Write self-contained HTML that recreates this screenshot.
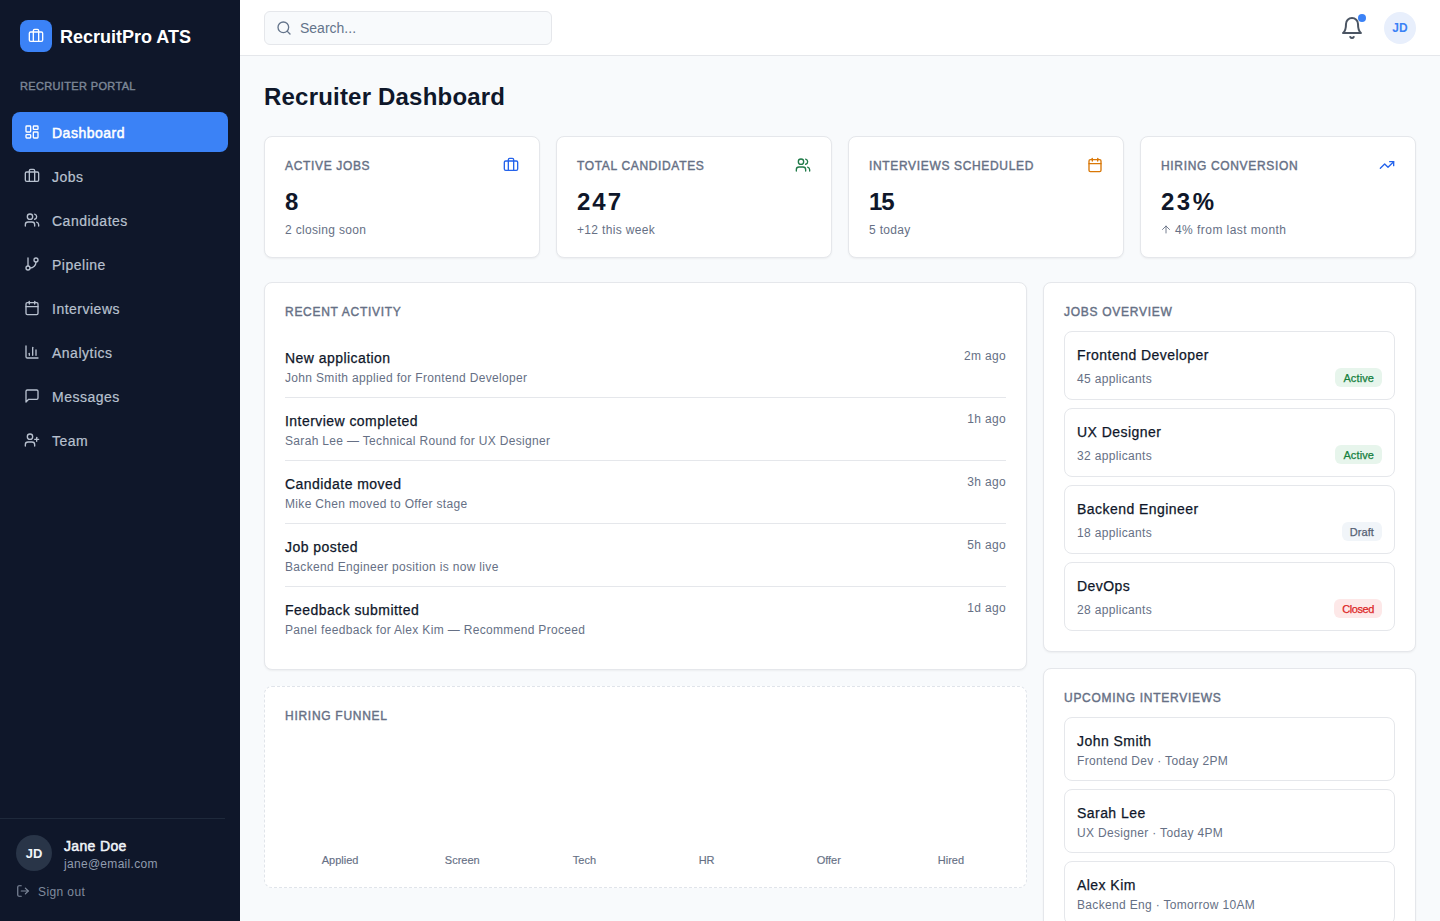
<!DOCTYPE html>
<html>
<head>
<meta charset="utf-8">
<style>
*{box-sizing:border-box;margin:0;padding:0}
html,body{width:1440px;height:921px;overflow:hidden;background:#f8fafc;font-family:"Liberation Sans",sans-serif;color:#0f172a}
svg{display:block}
.ic{fill:none;stroke:currentColor;stroke-width:2;stroke-linecap:round;stroke-linejoin:round}
#side{position:absolute;left:0;top:0;width:240px;height:921px;background:#0f172a;color:#fff}
.logo{position:absolute;left:20px;top:20px;width:32px;height:32px;border-radius:8px;background:#3b82f6;display:flex;align-items:center;justify-content:center;color:#fff}
.brand{position:absolute;left:60px;top:23px;line-height:28px;font-size:18px;font-weight:700;color:#fff}
.portal{position:absolute;left:20px;top:78px;line-height:16px;font-size:11px;font-weight:400;-webkit-text-stroke:0.4px currentColor;letter-spacing:0.35px;color:#7d8797}
.nav{position:absolute;left:12px;width:216px;height:40px;border-radius:8px;display:flex;align-items:center;padding-left:12px;color:#b8c1cf;font-size:14px;letter-spacing:0.5px;-webkit-text-stroke:0.2px currentColor}
.nav span{position:relative;top:1px}
.nav svg{width:16px;height:16px;margin-right:12px}
.nav.act{background:#3b82f6;color:#fff;-webkit-text-stroke:0.5px currentColor}
.divl{position:absolute;left:0;top:818px;width:225px;height:1px;background:#1e293b}
.uav{position:absolute;left:16px;top:835px;width:36px;height:36px;border-radius:50%;background:#293548;color:#f1f5f9;font-size:13px;font-weight:700;display:flex;align-items:center;justify-content:center}
.uname{position:absolute;left:64px;top:836px;line-height:20px;font-size:14px;font-weight:400;-webkit-text-stroke:0.5px currentColor;letter-spacing:0.35px;color:#f1f5f9}
.umail{position:absolute;left:64px;top:856px;line-height:16px;font-size:12px;color:#919caf;letter-spacing:0.3px}
.signout{position:absolute;left:16px;top:883px;height:16px;display:flex;align-items:center;color:#808b9d;font-size:12px;letter-spacing:0.4px}
.signout span{position:relative;top:1px}
.signout svg{width:14px;height:14px;margin-right:8px}

#top{position:absolute;left:240px;top:0;width:1200px;height:56px;background:#fff;border-bottom:1px solid #e5e7eb}
.search{position:absolute;left:24px;top:11px;width:288px;height:34px;border:1px solid #e5e7eb;border-radius:6px;background:#f8fafc;display:flex;align-items:center;padding-left:11px;color:#64748b;font-size:14px}
.search svg{width:16px;height:16px;margin-right:8px}
.bell{position:absolute;left:1100px;top:16px;width:24px;height:24px;color:#4b5563}
.dot{position:absolute;left:1118px;top:14px;width:8px;height:8px;border-radius:50%;background:#3b82f6}
.tav{position:absolute;left:1144px;top:12px;width:32px;height:32px;border-radius:50%;background:#e8effc;color:#3b82f6;font-size:12px;font-weight:700;display:flex;align-items:center;justify-content:center}

.h1{position:absolute;left:264px;top:81px;letter-spacing:0.2px;line-height:32px;font-size:24px;font-weight:700;color:#0f172a}
.card{position:absolute;background:#fff;border:1px solid #e5e7eb;border-radius:8px;box-shadow:0 1px 2px rgba(0,0,0,0.05)}
.stat{top:136px;width:276px;height:122px;padding:20px}
.lab{height:16px;display:flex;justify-content:space-between;align-items:center;font-size:12px;line-height:16px;font-weight:400;letter-spacing:0.66px;color:#667085}
.lab span{position:relative;top:1px;-webkit-text-stroke:0.4px currentColor}
.lab svg{width:16px;height:16px}
.val{margin-top:12px;line-height:32px;font-size:24px;font-weight:700;color:#0f172a;position:relative;top:1px;letter-spacing:0px}
.sub{margin-top:4px;line-height:16px;font-size:12px;color:#667085;position:relative;top:1px;letter-spacing:0.33px}
.sec{line-height:16px;font-size:12px;font-weight:400;-webkit-text-stroke:0.4px currentColor;letter-spacing:0.72px;color:#667085;position:relative;top:1px}
.act-item{display:flex;justify-content:space-between;align-items:flex-start;padding:12px 0;border-bottom:1px solid #e5e7eb;height:63px}
.act-item:last-child{border-bottom:none;height:62px}
.it{line-height:20px;font-size:14px;color:#0f172a;letter-spacing:0.45px;-webkit-text-stroke:0.25px #0f172a;position:relative;top:1px}
.is{margin-top:2px;line-height:16px;font-size:12px;color:#667085;letter-spacing:0.33px;position:relative;top:1px}
.tm{line-height:16px;font-size:12px;color:#667085;letter-spacing:0.33px;position:relative;top:1px}
.job{border:1px solid #e5e7eb;border-radius:8px;padding:12px;height:69px;margin-bottom:8px}
.jrow{margin-top:4px;display:flex;justify-content:space-between;align-items:center;height:19px}
.badge{font-size:11px;line-height:15px;padding:3px 8px 1px;border-radius:6px;font-weight:400;-webkit-text-stroke:0.25px currentColor;letter-spacing:0.1px}
.g{background:#e7f5ec;color:#15803d}
.d{background:#f1f5f9;color:#556173}
.r{background:#fde8e8;color:#dc2626}
.iv{border:1px solid #e5e7eb;border-radius:8px;padding:12px;height:64px;margin-bottom:8px}
.funnel{border:1px dashed #e0e4ea;box-shadow:none}
.flabs{position:absolute;left:20px;right:20px;top:164px;display:flex;gap:12px}
.flabs div{flex:1;text-align:center;font-size:11px;line-height:16px;color:#667085;position:relative;top:1px;-webkit-text-stroke:0.15px currentColor}
</style>
</head>
<body>
<div id="side">
  <div class="logo"><svg class="ic" width="16" height="16" viewBox="0 0 24 24"><path d="M16 20V4a2 2 0 0 0-2-2h-4a2 2 0 0 0-2 2v16"/><rect width="20" height="14" x="2" y="6" rx="2"/></svg></div>
  <div class="brand">RecruitPro ATS</div>
  <div class="portal">RECRUITER PORTAL</div>

  <div class="nav act" style="top:112px"><svg class="ic" viewBox="0 0 24 24"><rect width="7" height="9" x="3" y="3" rx="1"/><rect width="7" height="5" x="14" y="3" rx="1"/><rect width="7" height="9" x="14" y="12" rx="1"/><rect width="7" height="5" x="3" y="16" rx="1"/></svg><span>Dashboard</span></div>
  <div class="nav" style="top:156px"><svg class="ic" viewBox="0 0 24 24"><path d="M16 20V4a2 2 0 0 0-2-2h-4a2 2 0 0 0-2 2v16"/><rect width="20" height="14" x="2" y="6" rx="2"/></svg><span>Jobs</span></div>
  <div class="nav" style="top:200px"><svg class="ic" viewBox="0 0 24 24"><path d="M16 21v-2a4 4 0 0 0-4-4H6a4 4 0 0 0-4 4v2"/><circle cx="9" cy="7" r="4"/><path d="M22 21v-2a4 4 0 0 0-3-3.87"/><path d="M16 3.13a4 4 0 0 1 0 7.75"/></svg><span>Candidates</span></div>
  <div class="nav" style="top:244px"><svg class="ic" viewBox="0 0 24 24"><line x1="6" x2="6" y1="3" y2="15"/><circle cx="18" cy="6" r="3"/><circle cx="6" cy="18" r="3"/><path d="M18 9a9 9 0 0 1-9 9"/></svg><span>Pipeline</span></div>
  <div class="nav" style="top:288px"><svg class="ic" viewBox="0 0 24 24"><rect width="18" height="18" x="3" y="4" rx="2"/><path d="M16 2v4"/><path d="M8 2v4"/><path d="M3 10h18"/></svg><span>Interviews</span></div>
  <div class="nav" style="top:332px"><svg class="ic" viewBox="0 0 24 24"><path d="M3 3v16a2 2 0 0 0 2 2h16"/><path d="M18 17V9"/><path d="M13 17V5"/><path d="M8 17v-3"/></svg><span>Analytics</span></div>
  <div class="nav" style="top:376px"><svg class="ic" viewBox="0 0 24 24"><path d="M21 15a2 2 0 0 1-2 2H7l-4 4V5a2 2 0 0 1 2-2h14a2 2 0 0 1 2 2z"/></svg><span>Messages</span></div>
  <div class="nav" style="top:420px"><svg class="ic" viewBox="0 0 24 24"><path d="M16 21v-2a4 4 0 0 0-4-4H6a4 4 0 0 0-4 4v2"/><circle cx="9" cy="7" r="4"/><line x1="19" x2="19" y1="8" y2="14"/><line x1="22" x2="16" y1="11" y2="11"/></svg><span>Team</span></div>

  <div class="divl"></div>
  <div class="uav">JD</div>
  <div class="uname">Jane Doe</div>
  <div class="umail">jane@email.com</div>
  <div class="signout"><svg class="ic" viewBox="0 0 24 24"><path d="M9 21H5a2 2 0 0 1-2-2V5a2 2 0 0 1 2-2h4"/><polyline points="16 17 21 12 16 7"/><line x1="21" x2="9" y1="12" y2="12"/></svg><span>Sign out</span></div>
</div>

<div id="top">
  <div class="search"><svg class="ic" viewBox="0 0 24 24"><circle cx="11" cy="11" r="8"/><path d="m21 21-4.3-4.3"/></svg>Search...</div>
  <svg class="ic bell" viewBox="0 0 24 24"><path d="M6 8a6 6 0 0 1 12 0c0 7 3 9 3 9H3s3-2 3-9"/><path d="M10.3 21a1.94 1.94 0 0 0 3.4 0"/></svg>
  <div class="dot"></div>
  <div class="tav">JD</div>
</div>

<div class="h1">Recruiter Dashboard</div>

<div class="card stat" style="left:264px">
  <div class="lab"><span>ACTIVE JOBS</span><svg class="ic" viewBox="0 0 24 24" style="color:#2563eb"><path d="M16 20V4a2 2 0 0 0-2-2h-4a2 2 0 0 0-2 2v16"/><rect width="20" height="14" x="2" y="6" rx="2"/></svg></div>
  <div class="val">8</div>
  <div class="sub">2 closing soon</div>
</div>
<div class="card stat" style="left:556px">
  <div class="lab"><span>TOTAL CANDIDATES</span><svg class="ic" viewBox="0 0 24 24" style="color:#1f7a48"><path d="M16 21v-2a4 4 0 0 0-4-4H6a4 4 0 0 0-4 4v2"/><circle cx="9" cy="7" r="4"/><path d="M22 21v-2a4 4 0 0 0-3-3.87"/><path d="M16 3.13a4 4 0 0 1 0 7.75"/></svg></div>
  <div class="val" style="letter-spacing:2px">247</div>
  <div class="sub">+12 this week</div>
</div>
<div class="card stat" style="left:848px">
  <div class="lab"><span>INTERVIEWS SCHEDULED</span><svg class="ic" viewBox="0 0 24 24" style="color:#d97706"><rect width="18" height="18" x="3" y="4" rx="2"/><path d="M16 2v4"/><path d="M8 2v4"/><path d="M3 10h18"/></svg></div>
  <div class="val" style="letter-spacing:-1px">15</div>
  <div class="sub">5 today</div>
</div>
<div class="card stat" style="left:1140px">
  <div class="lab"><span>HIRING CONVERSION</span><svg class="ic" viewBox="0 0 24 24" style="color:#2563eb"><polyline points="22 7 13.5 15.5 8.5 10.5 2 17"/><polyline points="16 7 22 7 22 13"/></svg></div>
  <div class="val" style="letter-spacing:2.5px">23%</div>
  <div class="sub" style="display:flex;align-items:center;letter-spacing:0.45px"><svg class="ic" viewBox="0 0 24 24" style="width:12px;height:13px;margin-left:-1px;margin-right:3px;position:relative;top:-1px;stroke-width:1.8"><path d="m5 12 7-7 7 7"/><path d="M12 19V5"/></svg>4% from last month</div>
</div>

<div class="card" style="left:264px;top:282px;width:763px;height:388px;padding:20px">
  <div class="sec" style="margin-bottom:16px">RECENT ACTIVITY</div>
  <div class="act-item"><div><div class="it">New application</div><div class="is">John Smith applied for Frontend Developer</div></div><div class="tm">2m ago</div></div>
  <div class="act-item"><div><div class="it">Interview completed</div><div class="is">Sarah Lee — Technical Round for UX Designer</div></div><div class="tm">1h ago</div></div>
  <div class="act-item"><div><div class="it">Candidate moved</div><div class="is">Mike Chen moved to Offer stage</div></div><div class="tm">3h ago</div></div>
  <div class="act-item"><div><div class="it">Job posted</div><div class="is">Backend Engineer position is now live</div></div><div class="tm">5h ago</div></div>
  <div class="act-item"><div><div class="it">Feedback submitted</div><div class="is">Panel feedback for Alex Kim — Recommend Proceed</div></div><div class="tm">1d ago</div></div>
</div>

<div class="card funnel" style="left:264px;top:686px;width:763px;height:202px;padding:20px">
  <div class="sec">HIRING FUNNEL</div>
  <div class="flabs"><div>Applied</div><div>Screen</div><div>Tech</div><div>HR</div><div>Offer</div><div>Hired</div></div>
</div>

<div class="card" style="left:1043px;top:282px;width:373px;height:370px;padding:20px">
  <div class="sec" style="margin-bottom:12px">JOBS OVERVIEW</div>
  <div class="job"><div class="it">Frontend Developer</div><div class="jrow"><div class="tm">45 applicants</div><span class="badge g">Active</span></div></div>
  <div class="job"><div class="it">UX Designer</div><div class="jrow"><div class="tm">32 applicants</div><span class="badge g">Active</span></div></div>
  <div class="job"><div class="it">Backend Engineer</div><div class="jrow"><div class="tm">18 applicants</div><span class="badge d">Draft</span></div></div>
  <div class="job" style="margin-bottom:0"><div class="it">DevOps</div><div class="jrow"><div class="tm">28 applicants</div><span class="badge r" style="letter-spacing:-0.4px">Closed</span></div></div>
</div>

<div class="card" style="left:1043px;top:668px;width:373px;height:278px;padding:20px">
  <div class="sec" style="margin-bottom:12px">UPCOMING INTERVIEWS</div>
  <div class="iv"><div class="it">John Smith</div><div class="is">Frontend Dev · Today 2PM</div></div>
  <div class="iv"><div class="it">Sarah Lee</div><div class="is">UX Designer · Today 4PM</div></div>
  <div class="iv"><div class="it">Alex Kim</div><div class="is">Backend Eng · Tomorrow 10AM</div></div>
</div>

</body>
</html>
